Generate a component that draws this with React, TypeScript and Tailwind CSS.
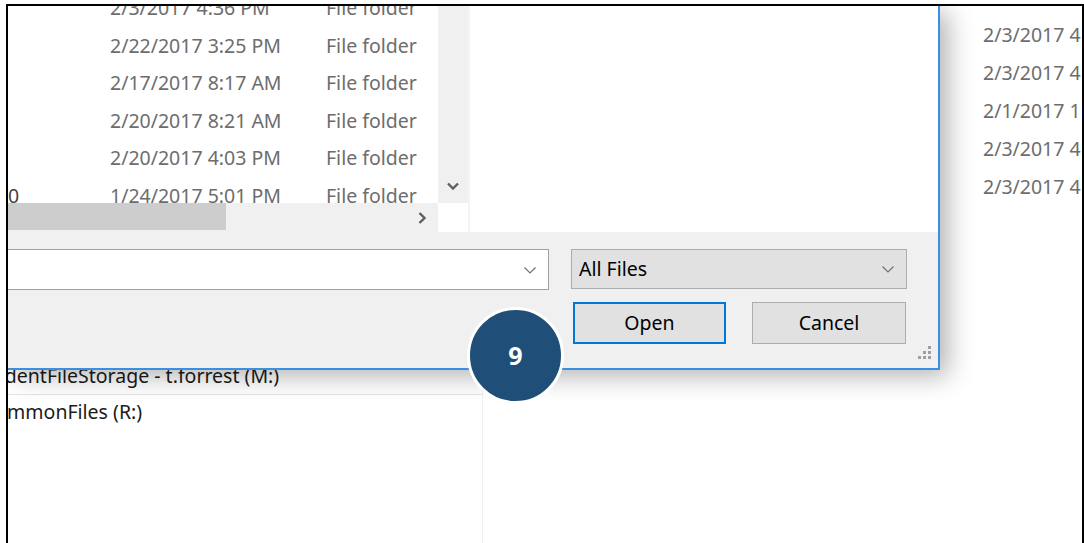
import React from "react";

const font = { fontFamily: '"Noto Sans", "Open Sans", sans-serif' };

const folders = [
  { name: "", date: "2/3/2017 4:36 PM" },
  { name: "", date: "2/22/2017 3:25 PM" },
  { name: "", date: "2/17/2017 8:17 AM" },
  { name: "", date: "2/20/2017 8:21 AM" },
  { name: "", date: "2/20/2017 4:03 PM" },
  { name: "0", date: "1/24/2017 5:01 PM" },
];

const backDates = ["2/3/2017 4:36 PM", "2/3/2017 4:36 PM", "2/1/2017 1:12 PM", "2/3/2017 4:36 PM", "2/3/2017 4:36 PM"];

const Chevron = ({ className }: { className?: string }) => (
  <svg viewBox="0 0 16 16" className={className} fill="none" stroke="currentColor" strokeWidth="1.2">
    <path d="M2.5 5.5 8 11l5.5-5.5" />
  </svg>
);

const FileList = () => (
  <div className="flex h-[226px] bg-white">
    <div className="flex w-[460px] flex-col">
      <div className="flex flex-1 overflow-hidden">
        <div className="w-[430px] overflow-hidden">
          <div className="-mt-[17px]">
            {folders.map((f, i) => (
              <div key={i} className="flex h-[37.5px] items-center whitespace-nowrap text-[19.5px] text-[#6d6d6d]">
                <span className="w-[102px] text-[#444]">{f.name}</span>
                <span className="w-[216px]">{f.date}</span>
                <span>File folder</span>
              </div>
            ))}
          </div>
        </div>
        {/* vertical scrollbar */}
        <div className="flex w-[30px] flex-col items-center justify-end bg-[#f0f0f0] pb-[13px]">
          <svg viewBox="0 0 12 8" className="h-[8px] w-[12px] text-[#606060]">
            <path d="M1 1.5 6 6.5l5-5" fill="none" stroke="currentColor" strokeWidth="2.4" />
          </svg>
        </div>
      </div>
      {/* horizontal scrollbar */}
      <div className="flex h-[29px]">
        <div className="flex w-[430px] items-center bg-[#f0f0f0]">
          <div className="h-[27px] w-[218px] self-start bg-[#cdcdcd]" />
          <div className="flex-1" />
          <svg viewBox="0 0 8 12" className="mr-[12px] h-[12px] w-[8px] text-[#606060]">
            <path d="M1.5 1 6.5 6l-5 5" fill="none" stroke="currentColor" strokeWidth="2.4" />
          </svg>
        </div>
        <div className="w-[30px] bg-white" />
      </div>
    </div>
    <div className="w-[2px] bg-[#f4f4f4]" />
    <div className="flex-1 bg-white" />
  </div>
);

const Grip = () => (
  <svg viewBox="0 0 14 14" className="h-[14px] w-[14px]" fill="#a0a0a0">
    <rect x="10" y="0" width="3" height="3" />
    <rect x="5" y="5" width="3" height="3" />
    <rect x="10" y="5" width="3" height="3" />
    <rect x="0" y="10" width="3" height="3" />
    <rect x="5" y="10" width="3" height="3" />
    <rect x="10" y="10" width="3" height="3" />
  </svg>
);

const BottomPanel = () => (
  <div className="relative h-[136px] bg-[#f0f0f0] pt-[17px]">
    <div className="flex">
      <div className="flex h-[41px] w-[541px] items-center justify-end border-y border-r border-[#a0a0a0] bg-white pr-[10px]">
        <Chevron className="h-[16px] w-[16px] text-[#707070]" />
      </div>
      <div className="ml-[22px] flex h-[40px] w-[336px] items-center justify-between border border-[#adadad] bg-[#e1e1e1] pl-[7px] pr-[10px] text-[19.5px] text-black">
        <span>All Files</span>
        <Chevron className="h-[16px] w-[16px] text-[#707070]" />
      </div>
    </div>
    <div className="mt-[12px] flex pl-[565px]">
      <button className="h-[42px] w-[153px] border-2 border-[#0078d7] bg-[#e1e1e1] text-[19.5px] text-black">Open</button>
      <button className="ml-[26px] h-[42px] w-[154px] border border-[#adadad] bg-[#e1e1e1] text-[19.5px] text-black">Cancel</button>
    </div>
    <div className="absolute bottom-[8px] right-[6px]">
      <Grip />
    </div>
  </div>
);

export default function App() {
  return (
    <div className="relative h-[543px] w-[1084px] overflow-hidden bg-white" style={font}>
      <div className="ml-[6px] mt-[4px] h-[539px] w-[1078px] border-x-2 border-t-2 border-black">
        <div className="relative h-full w-full overflow-hidden">
          {/* explorer window underneath */}
          <div className="flex h-full">
            <div className="flex w-[475px] flex-col border-r border-[#f0f0f0] pt-[351px]">
              <div className="flex h-[38px] items-center overflow-hidden whitespace-nowrap border-b border-[#e5e5e5] text-[19.5px] text-[#1a1a1a]">
                <span className="-ml-[33px]">StudentFileStorage - t.forrest (M:)</span>
              </div>
              <div className="flex h-[34px] items-center overflow-hidden whitespace-nowrap text-[19.5px] text-[#1a1a1a]">
                <span className="-ml-[25px]">CommonFiles (R:)</span>
              </div>
            </div>
            <div className="flex-1" />
            <div className="w-[99px] overflow-hidden whitespace-nowrap pt-[10px]">
              {backDates.map((d, i) => (
                <div key={i} className="flex h-[38px] items-center text-[19.5px] text-[#6d6d6d]">
                  {d}
                </div>
              ))}
            </div>
          </div>

          {/* open file dialog */}
          <div className="absolute left-0 top-0 w-[932px] border-b-2 border-r-2 border-[#3c8ee0] shadow-[8px_6px_24px_rgba(0,0,0,0.3)]">
            <FileList />
            <BottomPanel />
          </div>
        </div>
      </div>

      {/* step badge */}
      <div className="absolute left-[467px] top-[307px] flex h-[97px] w-[97px] items-center justify-center rounded-full border-[3px] border-white bg-[#1f4e79] text-[25px] font-bold text-white">
        9
      </div>
    </div>
  );
}
